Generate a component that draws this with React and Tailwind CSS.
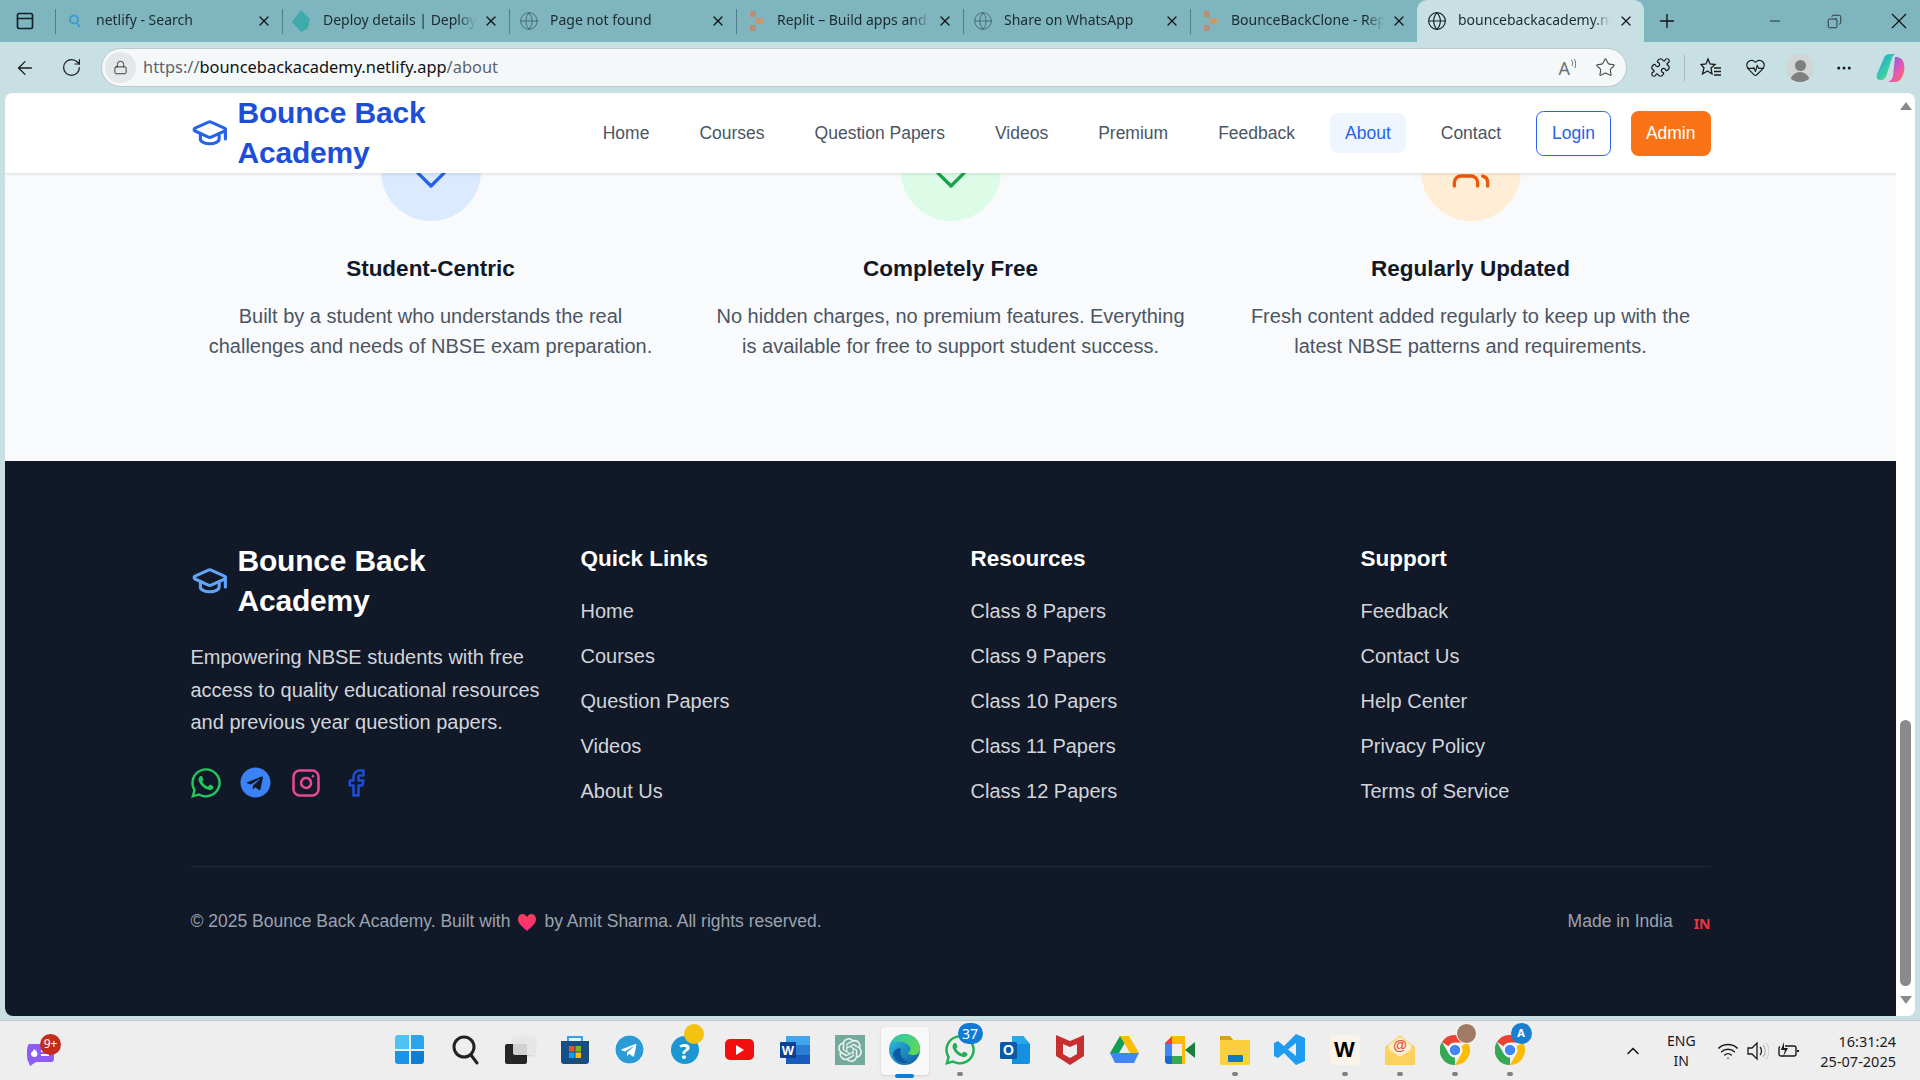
import {
  ArrowLeft,
  ChevronUp,
  Copy,
  Ellipsis,
  Facebook,
  Globe,
  GraduationCap,
  HeartPulse,
  Instagram,
  Lock,
  Minus,
  PanelTop,
  Plus,
  Puzzle,
  RotateCw,
  Star,
  Wifi,
  X,
} from "lucide-react";
import { FaTelegram, FaWhatsapp } from "react-icons/fa";
import { SiOpenai } from "react-icons/si";

const navLinks = ["Home", "Courses", "Question Papers", "Videos", "Premium", "Feedback", "About", "Contact"];

const footerColumns = [
  { title: "Quick Links", links: ["Home", "Courses", "Question Papers", "Videos", "About Us"] },
  { title: "Resources", links: ["Class 8 Papers", "Class 9 Papers", "Class 10 Papers", "Class 11 Papers", "Class 12 Papers"] },
  { title: "Support", links: ["Feedback", "Contact Us", "Help Center", "Privacy Policy", "Terms of Service"] },
];

const SearchFavicon = () => (
  <svg width="16" height="16" viewBox="0 0 16 16" fill="none" stroke="#3f9bd0" strokeWidth="2">
    <circle cx="7" cy="6.5" r="4" />
    <path d="M10 10l3 4" />
  </svg>
);

const NetlifyFavicon = () => (
  <svg width="20" height="22" viewBox="0 0 20 22">
    <path d="M9 0l9 9-3 10-6 3-9-10z" fill="#3fa9ad" />
    <path d="M11 17l2 2 4-5" fill="none" stroke="#3bb58a" strokeWidth="1.5" />
  </svg>
);

const ReplitFavicon = () => (
  <svg width="13" height="22" viewBox="0 0 13 22">
    <rect x="0" y="1" width="6" height="6" fill="#b98f7a" />
    <rect x="6" y="8" width="7" height="6" fill="#c59a70" />
    <rect x="0" y="15" width="6" height="6" fill="#b98f7a" />
  </svg>
);

const tabs = [
  { title: "netlify - Search", icon: <SearchFavicon /> },
  { title: "Deploy details | Deploys", icon: <NetlifyFavicon /> },
  { title: "Page not found", icon: <Globe size={20} strokeWidth={1} className="text-[#40606a]" /> },
  { title: "Replit – Build apps and sites", icon: <ReplitFavicon /> },
  { title: "Share on WhatsApp", icon: <Globe size={20} strokeWidth={1} className="text-[#40606a]" /> },
  { title: "BounceBackClone - Replit", icon: <ReplitFavicon /> },
];

function Tab({ title, icon, active }) {
  return (
    <div className={active ? "flex h-[42px] w-[227px] items-center rounded-t-[10px] bg-[#c8e0e4]" : "flex h-[42px] w-[227px] items-center"}>
      <div className={active ? "h-[25px] w-px" : "h-[25px] w-px bg-[#4f7f89]"} />
      <div className="ml-[9px] flex w-[20px] justify-center">{icon}</div>
      <div className="ml-[11px] -mt-[3px] w-[153px] overflow-hidden whitespace-nowrap text-[14px] text-[#1c2b2f] [mask-image:linear-gradient(to_right,black_88%,transparent)]">
        {title}
      </div>
      <X size={16} strokeWidth={1.8} className="ml-[7px] text-[#111]" />
    </div>
  );
}

function TabBar() {
  return (
    <div className="flex h-[42px] items-center bg-[#7fb5bf] font-['Noto_Sans',sans-serif]">
      <PanelTop size={20} strokeWidth={2} className="ml-[15px] shrink-0 text-[#14232a]" />
      <div className="ml-[20px] flex shrink-0">
        {tabs.map((t) => (
          <Tab key={t.title} title={t.title} icon={t.icon} />
        ))}
        <Tab title="bouncebackacademy.netlify.app" active icon={<Globe size={20} strokeWidth={1.4} className="text-[#10242b]" />} />
      </div>
      <Plus size={22} strokeWidth={1.5} className="ml-[12px] shrink-0 text-[#111]" />
      <Minus size={16} strokeWidth={1.2} className="ml-[89px] shrink-0 text-[#111]" />
      <Copy size={15} strokeWidth={1.2} className="ml-[44px] shrink-0 -scale-x-100 text-[#111]" />
      <svg width="16" height="16" viewBox="0 0 16 16" fill="none" stroke="#111" strokeWidth="1.2" className="ml-[49px] shrink-0">
        <path d="M1 1l14 14M15 1L1 15" />
      </svg>
    </div>
  );
}

function Toolbar() {
  return (
    <div className="flex h-[51px] items-center bg-[#c8e0e4] font-['Noto_Sans',sans-serif] text-[#1a1a1a]">
      <ArrowLeft size={22} strokeWidth={1.4} className="ml-[14px]" />
      <RotateCw size={21} strokeWidth={1.4} className="ml-[25px]" />
      <div className="ml-[19px] flex h-[39px] w-[1526px] items-center rounded-full border border-[#b9c9cc] bg-[#f5f8f9]">
        <div className="ml-[3px] flex h-[31px] w-[31px] items-center justify-center rounded-full bg-[#e4e8e9]">
          <Lock size={15} strokeWidth={1.5} className="text-[#333]" />
        </div>
        <div className="ml-[7px] text-[16.4px] text-[#5b6469]">
          https://<span className="text-[#111]">bouncebackacademy.netlify.app</span>/about
        </div>
        <div className="ml-auto flex items-center pr-[10px] text-[#6a7276]">
          <span className="text-[18px] leading-none">A</span>
          <svg width="7" height="14" viewBox="0 0 7 14" fill="none" stroke="#6a7276" className="mb-[6px]">
            <path d="M1 2c2 1 2 4 1 6M4 1c2 2 2 6 1 9" />
          </svg>
          <Star size={21} strokeWidth={1.2} className="ml-[18px] text-[#444]" />
        </div>
      </div>
      <Puzzle size={21} strokeWidth={1.4} className="ml-[23px]" />
      <div className="ml-[13px] h-[26px] w-px bg-[#a5bcc0]" />
      <svg width="22" height="22" viewBox="0 0 22 22" fill="none" stroke="#1a1a1a" strokeWidth="1.3" className="ml-[15px]">
        <path d="M8 2l2 5 5 .5-4 3.5 1 6-4.500-3-5 3 1.500-6L1 7.500 6 7z" />
        <path d="M14 11h7M14 14.500h7M14 18h7" />
      </svg>
      <HeartPulse size={21} strokeWidth={1.3} className="ml-[23px]" />
      <div className="ml-[20px] flex h-[28px] w-[28px] flex-col items-center justify-end overflow-hidden rounded-full bg-[#d0d5d6]">
        <div className="h-[11px] w-[11px] rounded-full bg-[#7f7f7f]" />
        <div className="mt-[1px] h-[10px] w-[20px] rounded-t-full bg-[#7f7f7f]" />
      </div>
      <Ellipsis size={18} strokeWidth={2} className="ml-[21px]" />
      <svg width="30" height="30" viewBox="0 0 30 30" className="ml-[23px]">
        <defs>
          <linearGradient id="cpA" x1="0" y1="0" x2="1" y2="1">
            <stop offset="0" stopColor="#1f9fe8" />
            <stop offset="0.6" stopColor="#3dd0a0" />
            <stop offset="1" stopColor="#e8d84a" />
          </linearGradient>
          <linearGradient id="cpB" x1="0" y1="0" x2="1" y2="1">
            <stop offset="0" stopColor="#6a5cf0" />
            <stop offset="0.6" stopColor="#e85ab0" />
            <stop offset="1" stopColor="#f5743a" />
          </linearGradient>
        </defs>
        <path d="M19 4c4 0 8 1 9 7 1 4 0 10-2 13-1 3-4 5-7 5h-7c3-1 4-3 5-6z" fill="url(#cpB)" />
        <path d="M8 5c1-3 3-4 6-4h6c-2 0-3 2-4 4l-5 16c-1 4-3 6-6 6H4c-3 0-4-3-3-6z" fill="url(#cpA)" />
      </svg>
    </div>
  );
}

function Logo({ dark }) {
  return (
    <div className="flex w-[300px] items-center gap-[9.5px]">
      <GraduationCap size={37.5} strokeWidth={2} className={dark ? "shrink-0 text-[#60a5fa]" : "shrink-0 text-[#2563eb]"} />
      <div className={dark ? "w-[220px] text-[30px] leading-[40px] font-bold tracking-[-0.2px] text-white" : "w-[220px] text-[30px] leading-[40px] font-bold tracking-[-0.2px] text-[#1d4ed8]"}>
        Bounce Back Academy
      </div>
    </div>
  );
}

function Navbar() {
  return (
    <nav className="relative z-10 h-[80px] bg-white shadow-[0_1px_4px_rgba(0,0,0,0.12)]">
      <div className="mx-auto flex h-full w-[1520px] items-center justify-between">
        <Logo />
        <div className="flex items-center gap-[20px] text-[17.5px] leading-[25px]">
          {navLinks.map((l) => (
            <a key={l} className={l === "About" ? "rounded-[7.5px] bg-[#eff6ff] px-[15px] py-[7.5px] text-[#2563eb]" : "rounded-[7.5px] px-[15px] py-[7.5px] text-[#4b5563]"}>
              {l}
            </a>
          ))}
          <button className="rounded-[7.5px] border border-[#2563eb] px-[15px] py-[9px] text-[#2563eb]">Login</button>
          <button className="rounded-[7.5px] bg-[#f97316] px-[15px] py-[10px] font-medium text-white">Admin</button>
        </div>
      </div>
    </nav>
  );
}

// tip of the old lucide heart, the rest sits behind the navbar
const HeartIcon = ({ className }) => (
  <svg width="40" height="40" viewBox="0 0 24 24" fill="none" stroke="currentColor" strokeWidth="2" strokeLinejoin="round" className={className}>
    <path d="M19 14c1.490-1.460 3-3.210 3-5.500A5.500 5.500 0 0 0 16.500 3c-1.760 0-3 .5-4.500 2-1.500-1.500-2.740-2-4.500-2A5.500 5.500 0 0 0 2 8.500c0 2.300 1.500 4.050 3 5.500l7 7Z" />
  </svg>
);

const UsersIcon = ({ className }) => (
  <svg width="40" height="40" viewBox="0 0 24 24" fill="none" stroke="currentColor" strokeWidth="2" strokeLinecap="round" strokeLinejoin="round" className={className}>
    <path d="M16 21v-2a4 4 0 0 0-4-4H6a4 4 0 0 0-4 4v2" />
    <path d="M22 21v-2a4 4 0 0 0-3-3.870" />
  </svg>
);

function ValueCard({ bg, icon, title, lines }) {
  return (
    <div className="flex flex-col items-center text-center">
      <div className={`-mt-[52px] mb-[30px] flex h-[100px] w-[100px] items-center justify-center rounded-full ${bg}`}>{icon}</div>
      <h3 className="mb-[15px] text-[22.5px] leading-[35px] font-bold text-[#111827]">{title}</h3>
      <p className="text-[20px] leading-[30px] text-[#4b5563]">
        {lines[0]}
        <br />
        {lines[1]}
      </p>
    </div>
  );
}

function Values() {
  return (
    <section className="bg-[#f9fafb] pb-[100px]">
      <div className="mx-auto grid w-[1520px] grid-cols-3 gap-[40px]">
        <ValueCard
          bg="bg-[#dbeafe]"
          icon={<HeartIcon className="text-[#2563eb]" />}
          title="Student-Centric"
          lines={["Built by a student who understands the real", "challenges and needs of NBSE exam preparation."]}
        />
        <ValueCard
          bg="bg-[#dcfce7]"
          icon={<HeartIcon className="text-[#16a34a]" />}
          title="Completely Free"
          lines={["No hidden charges, no premium features. Everything", "is available for free to support student success."]}
        />
        <ValueCard
          bg="bg-[#ffedd5]"
          icon={<UsersIcon className="text-[#ea580c]" />}
          title="Regularly Updated"
          lines={["Fresh content added regularly to keep up with the", "latest NBSE patterns and requirements."]}
        />
      </div>
    </section>
  );
}

function Footer() {
  return (
    <footer className="bg-[#111827] pt-[80px] pb-[80px]">
      <div className="mx-auto w-[1520px]">
        <div className="grid grid-cols-4 gap-[40px]">
          <div>
            <Logo dark />
            <p className="mt-[20px] mb-[29px] text-[20px] leading-[32.5px] text-[#d1d5db]">
              Empowering NBSE students with free access to quality educational resources and previous year question papers.
            </p>
            <div className="flex h-[30px] items-center gap-[20px]">
              <div className="flex w-[30px] justify-center">
                <FaWhatsapp size={34} className="shrink-0 text-[#22c55e]" />
              </div>
              <div className="flex w-[30px] justify-center">
                <FaTelegram size={31} className="shrink-0 text-[#3b82f6]" />
              </div>
              <Instagram size={30} strokeWidth={2} className="text-[#ec4899]" />
              <Facebook size={30} strokeWidth={2} className="text-[#1d4ed8]" />
            </div>
          </div>
          {footerColumns.map((col) => (
            <div key={col.title}>
              <h4 className="mb-[20px] text-[22.5px] leading-[35px] font-bold text-white">{col.title}</h4>
              <ul className="flex flex-col gap-[15px] text-[20px] leading-[30px] text-[#d1d5db]">
                {col.links.map((l) => (
                  <li key={l}>{l}</li>
                ))}
              </ul>
            </div>
          ))}
        </div>
        <div className="mt-[60px] flex items-center justify-between border-t border-[#1f2937] pt-[40px] text-[17.5px] leading-[25px] text-[#9ca3af]">
          <div className="flex items-center">
            © 2025 Bounce Back Academy. Built with
            <svg width="18" height="17" viewBox="0 0 18 17" className="mx-[8px] mt-[1px]">
              <defs>
                <linearGradient id="footHeart" x1="0" y1="0" x2="0" y2="1">
                  <stop offset="0" stopColor="#f43f5e" />
                  <stop offset="1" stopColor="#ff2a78" />
                </linearGradient>
              </defs>
              <path d="M9 17C5 13 0 10 0 5c0-3 2-5 4.500-5C6.500 0 8 1 9 3c1-2 2.500-3 4.500-3C16 0 18 2 18 5c0 5-5 8-9 12z" fill="url(#footHeart)" />
            </svg>
            by Amit Sharma. All rights reserved.
          </div>
          <div className="flex items-center">
            Made in India
            <span className="ml-[21px] mt-[4px] font-['Noto_Sans',sans-serif] text-[14px] font-bold text-[#ef3340]">IN</span>
          </div>
        </div>
      </div>
    </footer>
  );
}

function Scrollbar() {
  return (
    <div className="flex w-[19px] shrink-0 flex-col items-center bg-white">
      <div className="mt-[9px] h-0 w-0 border-x-[6px] border-b-[8px] border-x-transparent border-b-[#8a8a8a]" />
      <div className="mt-[610px] h-[266px] w-[11px] rounded-full bg-[#8a8a8a]" />
      <div className="mt-[10px] h-0 w-0 border-x-[6px] border-t-[8px] border-x-transparent border-t-[#8a8a8a]" />
    </div>
  );
}

const ChromeIcon = () => (
  <svg width="30" height="30" viewBox="0 0 30 30">
    <path d="M15 0a15 15 0 0 1 13 7.500H15a7.500 7.500 0 0 0-6.500 3.750L2 7a15 15 0 0 1 13-7z" fill="#ea4335" />
    <path d="M28 7.500A15 15 0 0 1 15 30l6.500-11.250A7.500 7.500 0 0 0 21.500 11.250z" fill="#fbbc04" />
    <path d="M15 30A15 15 0 0 1 2 7l6.500 11.250A7.500 7.500 0 0 0 15 22.500z" fill="#34a853" />
    <circle cx="15" cy="15" r="6" fill="#4285f4" stroke="#fff" strokeWidth="1.500" />
  </svg>
);

const dockIcons = [
  {
    key: "start",
    icon: (
      <div className="grid h-[29px] w-[29px] grid-cols-2 gap-[2px]">
        <div className="rounded-tl-[3px] bg-[#4cc2f5]" />
        <div className="rounded-tr-[3px] bg-[#2aa5ec]" />
        <div className="rounded-bl-[3px] bg-[#1a94e4]" />
        <div className="rounded-br-[3px] bg-[#0b7fd6]" />
      </div>
    ),
  },
  {
    key: "search",
    icon: (
      <svg width="28" height="30" viewBox="0 0 28 30" fill="none" stroke="#222" strokeWidth="3">
        <circle cx="13" cy="12" r="10" />
        <path d="M20 20l6 8" strokeLinecap="round" />
      </svg>
    ),
  },
  {
    key: "taskview",
    icon: (
      <div className="relative h-[28px] w-[30px]">
        <div className="absolute bottom-0 left-0 h-[20px] w-[22px] rounded-[2px] bg-[#262626]" />
        <div className="absolute top-0 right-0 h-[19px] w-[22px] rounded-[2px] bg-[#e4e4e4]/90 shadow-sm" />
      </div>
    ),
  },
  {
    key: "store",
    icon: (
      <svg width="30" height="30" viewBox="0 0 30 30">
        <path d="M8 6V2h14v4" fill="none" stroke="#2da3e8" strokeWidth="2" />
        <path d="M1 6h28v20a3 3 0 0 1-3 3H4a3 3 0 0 1-3-3z" fill="#174f85" />
        <rect x="9" y="11" width="5.500" height="5.500" fill="#f25022" />
        <rect x="15.500" y="11" width="5.500" height="5.500" fill="#7fba00" />
        <rect x="9" y="17.500" width="5.500" height="5.500" fill="#00a4ef" />
        <rect x="15.500" y="17.500" width="5.500" height="5.500" fill="#ffb900" />
      </svg>
    ),
  },
  { key: "telegram", icon: <FaTelegram size={29} className="rounded-full bg-white text-[#2a9bd6]" /> },
  {
    key: "help",
    icon: (
      <div className="relative h-[28px] w-[28px] rounded-full bg-[#1b96d3] text-center text-[22px] leading-[28px] font-bold text-white">
        ?
        <div className="absolute -top-[12px] left-[13px] h-[20px] w-[20px] rounded-full bg-[#f5c20f]" />
      </div>
    ),
  },
  {
    key: "youtube",
    icon: (
      <div className="flex h-[21px] w-[29px] items-center justify-center rounded-[5px] bg-[#f40f0f]">
        <div className="h-0 w-0 border-y-[5px] border-l-[8px] border-y-transparent border-l-white" />
      </div>
    ),
  },
  {
    key: "word",
    icon: (
      <svg width="30" height="30" viewBox="0 0 30 30">
        <rect x="6" y="1" width="24" height="9" fill="#41a5ee" />
        <rect x="6" y="10" width="24" height="10" fill="#2b7cd3" />
        <rect x="6" y="20" width="24" height="9" fill="#185abd" />
        <rect x="0" y="7" width="16" height="16" rx="1" fill="#103f91" />
        <text x="8" y="20" textAnchor="middle" fontSize="13" fontWeight="700" fill="#fff" fontFamily="Liberation Sans">W</text>
      </svg>
    ),
  },
  {
    key: "chatgpt",
    icon: (
      <div className="flex h-[30px] w-[30px] items-center justify-center bg-[#74aa9c]">
        <SiOpenai size={24} className="text-[#e9f2ef]" />
      </div>
    ),
  },
  {
    key: "edge",
    active: true,
    icon: (
      <svg width="31" height="31" viewBox="0 0 31 31">
        <defs>
          <linearGradient id="edgeA" x1="0" y1="0" x2="1" y2="1">
            <stop offset="0" stopColor="#33c6e0" />
            <stop offset="1" stopColor="#0c59a4" />
          </linearGradient>
          <linearGradient id="edgeB" x1="0" y1="0" x2="1" y2="0.500">
            <stop offset="0" stopColor="#2cc4b6" />
            <stop offset="1" stopColor="#5bd85b" />
          </linearGradient>
        </defs>
        <circle cx="15.500" cy="15.500" r="15.500" fill="url(#edgeA)" />
        <path d="M2 9C5 2 11 0 15.500 0 24 0 31 6 31 15c0 4-3 6-7 6-3 0-5-1-5-2 2-1 3-3 2-6-2-5-14-7-19-4z" fill="url(#edgeB)" />
        <path d="M12 15c-2 5 1 11 7 13-6 3-14-1-15-8 1-4 5-7 8-5z" fill="#0c59a4" />
      </svg>
    ),
  },
  {
    key: "whatsapp",
    dot: true,
    icon: (
      <div className="relative">
        <FaWhatsapp size={34} className="text-[#1faf54]" />
        <div className="absolute -top-[10px] left-[15px] flex h-[21px] w-[25px] items-center justify-center rounded-full bg-[#0f7bd4] text-[14px] text-white">37</div>
      </div>
    ),
  },
  {
    key: "outlook",
    icon: (
      <svg width="30" height="30" viewBox="0 0 30 30">
        <path d="M12 1h11l7 8v18a2 2 0 0 1-2 2H12z" fill="#1490df" />
        <path d="M12 1h11l7 8H12z" fill="#28a8ea" />
        <rect x="0" y="7" width="17" height="17" rx="1.500" fill="#0a5aa8" />
        <text x="8.500" y="20" textAnchor="middle" fontSize="14" fontWeight="700" fill="#fff" fontFamily="Liberation Sans">O</text>
      </svg>
    ),
  },
  {
    key: "mcafee",
    icon: (
      <svg width="28" height="30" viewBox="0 0 28 30">
        <path d="M0 0l14 6 14-6v21l-14 9-14-9z" fill="#c62f2f" />
        <path d="M7 9l7 3 7-3v10l-7 4-7-4z" fill="#eee" />
      </svg>
    ),
  },
  {
    key: "drive",
    icon: (
      <svg width="29" height="27" viewBox="0 0 29 27">
        <path d="M10 0h9L9 17H0z" fill="#0f9d58" />
        <path d="M10 0h9l10 17h-9z" fill="#fbbc04" />
        <path d="M0 17h29l-5 10H5z" fill="#4285f4" />
      </svg>
    ),
  },
  {
    key: "meet",
    icon: (
      <svg width="30" height="28" viewBox="0 0 30 28">
        <path d="M7 0h13v8H7z" fill="#fbbc04" />
        <path d="M0 7L7 0v8H0z" fill="#ea4335" />
        <path d="M0 8h7v12H0z" fill="#4285f4" />
        <path d="M0 20h7v8H3a3 3 0 0 1-3-3z" fill="#1967d2" />
        <path d="M7 20h13v5a3 3 0 0 1-3 3H7z" fill="#34a853" />
        <path d="M20 0v28l-3 0V0z" fill="#fbbc04" />
        <path d="M20 14l10-8v16z" fill="#188038" />
      </svg>
    ),
  },
  {
    key: "files",
    dot: true,
    icon: (
      <svg width="30" height="30" viewBox="0 0 30 30">
        <path d="M0 3a2 2 0 0 1 2-2h8l3 4h17v23a2 2 0 0 1-2 2H2a2 2 0 0 1-2-2z" fill="#fbcf3e" />
        <path d="M0 1h10l3 4H0z" fill="#d6a112" />
        <rect x="8" y="20" width="15" height="7" rx="1" fill="#1276c4" />
      </svg>
    ),
  },
  {
    key: "vscode",
    icon: (
      <svg width="31" height="31" viewBox="0 0 31 31">
        <path d="M22 0l9 4v23l-9 4-12-12-6 5-4-2V9l4-2 6 5zM22 9l-8 6.500 8 6.500z" fill="#1f9cf0" />
      </svg>
    ),
  },
  {
    key: "w",
    dot: true,
    icon: (
      <div className="flex h-[30px] w-[30px] items-center justify-center rounded-[3px] bg-[#faf3e8] font-['Liberation_Sans',sans-serif] text-[22px] font-bold text-black">W</div>
    ),
  },
  {
    key: "mail",
    dot: true,
    icon: (
      <svg width="30" height="30" viewBox="0 0 30 30">
        <path d="M0 12L15 0l15 12v18H0z" fill="#f9d36b" />
        <path d="M4 10L15 2l11 8v8L15 24 4 18z" fill="#fbeed0" />
        <path d="M0 12l15 10 15-10v18H0z" fill="#fbd25d" />
        <text x="15" y="15" textAnchor="middle" fontSize="14" fontWeight="700" fill="#e2503e" fontFamily="Liberation Sans">@</text>
      </svg>
    ),
  },
  {
    key: "chrome1",
    dot: true,
    icon: (
      <div className="relative">
        <ChromeIcon />
        <div className="absolute -top-[12px] left-[16px] h-[21px] w-[21px] rounded-full border border-white bg-[#a07a62]" />
      </div>
    ),
  },
  {
    key: "chrome2",
    dot: true,
    icon: (
      <div className="relative">
        <ChromeIcon />
        <div className="absolute -top-[12px] left-[16px] flex h-[21px] w-[21px] items-center justify-center rounded-full bg-[#1a7fd0] text-[11px] font-bold text-white">A</div>
      </div>
    ),
  },
];

function Taskbar() {
  return (
    <div className="flex h-[60px] items-center border-t border-[#c2c9cb] bg-[#eeeeee] font-['Noto_Sans',sans-serif] text-[#1a1a1a]">
      <div className="w-[382px] shrink-0 pl-[26px]">
        <div className="relative">
          <svg width="28" height="26" viewBox="0 0 28 26" className="mt-[6px]">
            <path d="M3 3h22a3 3 0 0 1 3 3v12a3 3 0 0 1-3 3H10l-6 4-2-5c-1-1-2-15 1-17z" fill="#8b5cf6" />
            <path d="M8 8c3 2 4 4 3 7-2 2-6 1-6-2 0-2 2-2 3-5z" fill="#fff" />
            <path d="M15 10h8M15 14h8" stroke="#fff" strokeWidth="2" />
          </svg>
          <div className="absolute -top-[7px] left-[14px] flex h-[21px] w-[21px] items-center justify-center rounded-full bg-[#c42b1c] text-[12px] text-white">9+</div>
        </div>
      </div>
      <div className="flex w-[1155px] shrink-0">
        {dockIcons.map((d) => (
          <div key={d.key} className="relative flex h-[59px] w-[55px] items-center justify-center">
            {d.active && <div className="absolute top-[6px] h-[48px] w-[48px] rounded-[4px] bg-[#f8f8f8] shadow-sm" />}
            <div className="relative -mt-[2px]">{d.icon}</div>
            {d.active && <div className="absolute bottom-[2px] h-[4px] w-[19px] rounded-full bg-[#0b7fd6]" />}
            {d.dot && <div className="absolute bottom-[4px] h-[4px] w-[6px] rounded-full bg-[#808080]" />}
          </div>
        ))}
      </div>
      <ChevronUp size={20} strokeWidth={2} className="ml-[86px]" />
      <div className="ml-[24px] text-center text-[14px] leading-[20px]">
        ENG
        <br />
        IN
      </div>
      <Wifi size={22} strokeWidth={1.6} className="ml-[21px]" />
      <svg width="22" height="20" viewBox="0 0 22 20" fill="none" stroke="#1a1a1a" strokeWidth="1.3" className="ml-[8px]">
        <path d="M1 7h4l5-5v16l-5-5H1z" />
        <path d="M13 6c2 2 2 6 0 8" />
        <path d="M16 4c3 3 3 9 0 12" stroke="#b5b5b5" />
        <path d="M19 2c4 4 4 12 0 16" stroke="#d0d0d0" />
      </svg>
      <svg width="21" height="20" viewBox="0 0 21 20" fill="none" stroke="#1a1a1a" strokeWidth="1.4" className="ml-[9px]">
        <path d="M7 5h9a2 2 0 0 1 2 2v6a2 2 0 0 1-2 2H3a2 2 0 0 1-2-2V7a2 2 0 0 1 1-1.500" />
        <path d="M20 9v2" strokeWidth="2" />
        <path d="M6 1L3 9h4l-2 7 5-9H6z" fill="#1a1a1a" stroke="none" />
      </svg>
      <div className="ml-auto pr-[24px] text-right text-[14.5px] leading-[20px]">
        16:31:24
        <br />
        25-07-2025
      </div>
    </div>
  );
}

export default function App() {
  return (
    <div className="flex h-[1080px] w-[1920px] flex-col overflow-hidden bg-[#c8e0e4]">
      <TabBar />
      <Toolbar />
      <div className="mx-[5px] flex h-[923px] shrink-0 overflow-hidden rounded-b-[8px] rounded-t-[8px] bg-white font-['Liberation_Sans',Arial,sans-serif]">
        <main className="w-[1891px] shrink-0 overflow-hidden">
          <Navbar />
          <Values />
          <Footer />
        </main>
        <Scrollbar />
      </div>
      <div className="h-[4px] shrink-0" />
      <Taskbar />
    </div>
  );
}
